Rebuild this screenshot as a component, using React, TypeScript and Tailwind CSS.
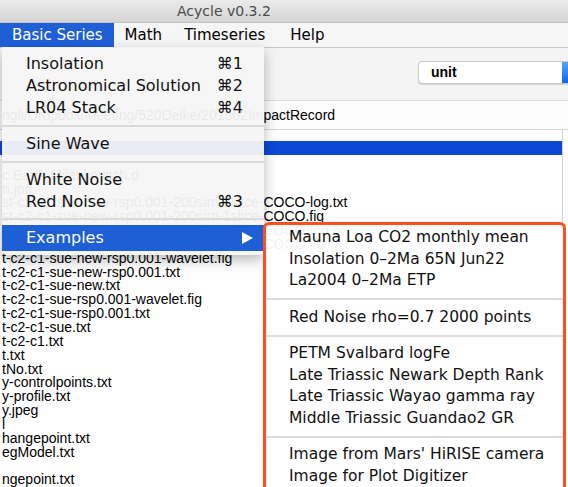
import React from 'react';

const files: string[] = [
  '',
  '',
  'c Earth Milankovitch.d',
  'n.jpg',
  'st-c2-c1-sue-new-rsp0.001-200sim-1slice-COCO-log.txt',
  'st-c2-c1-sue-new-rsp0.001-200sim-1slice-COCO.fig',
  'st-c2-c1-sue-new-rsp0.001-600sim-1slice-COCO-log.txt',
  'st-c2-c1-sue-new-rsp0.001-600sim-1slice-COCO.fig',
  't-c2-c1-sue-new-rsp0.001-wavelet.fig',
  't-c2-c1-sue-new-rsp0.001.txt',
  't-c2-c1-sue-new.txt',
  't-c2-c1-sue-rsp0.001-wavelet.fig',
  't-c2-c1-sue-rsp0.001.txt',
  't-c2-c1-sue.txt',
  't-c2-c1.txt',
  't.txt',
  'tNo.txt',
  'y-controlpoints.txt',
  'y-profile.txt',
  'y.jpeg',
  'l',
  'hangepoint.txt',
  'egModel.txt',
  '',
  'ngepoint.txt',
];

type Entry = { label: string; key?: string } | 'sep';

const basicSeries: Entry[] = [
  { label: 'Insolation', key: '⌘1' },
  { label: 'Astronomical Solution', key: '⌘2' },
  { label: 'LR04 Stack', key: '⌘4' },
  'sep',
  { label: 'Sine Wave' },
  'sep',
  { label: 'White Noise' },
  { label: 'Red Noise', key: '⌘3' },
];

const examples: Entry[] = [
  { label: 'Mauna Loa CO2 monthly mean' },
  { label: 'Insolation 0–2Ma 65N Jun22' },
  { label: 'La2004 0–2Ma ETP' },
  'sep',
  { label: 'Red Noise rho=0.7 2000 points' },
  'sep',
  { label: 'PETM Svalbard logFe' },
  { label: 'Late Triassic Newark Depth Rank' },
  { label: 'Late Triassic Wayao gamma ray' },
  { label: 'Middle Triassic Guandao2 GR' },
  'sep',
  { label: "Image from Mars' HiRISE camera" },
  { label: 'Image for Plot Digitizer' },
];

const menuFont = { fontFamily: '"DejaVu Sans", sans-serif' };

export default function App() {
  return (
    <div
      className="relative w-[568px] h-[487px] overflow-hidden bg-white text-black"
      style={{ fontFamily: '"Liberation Sans", Arial, sans-serif' }}
    >
      {/* title bar */}
      <div
        className="h-[23px] flex items-center pl-[177px] pt-[1px] border-b border-[#c4c4c4] bg-linear-to-b from-[#ebebeb] to-[#d5d5d5] text-[14px] text-[#4a4a4a]"
        style={menuFont}
      >
        Acycle v0.3.2
      </div>

      {/* menu bar */}
      <div className="h-[25px] flex items-stretch bg-[#f6f6f6] border-b border-[#c8c8c8] text-[15px]" style={menuFont}>
        <div className="flex items-center pl-[12px] pr-[11px] bg-[#1f5fd6] text-white">Basic Series</div>
        <div className="flex items-center px-[11px]">Math</div>
        <div className="flex items-center pl-[11px] pr-[13px]">Timeseries</div>
        <div className="flex items-center px-[12px]">Help</div>
      </div>

      {/* toolbar */}
      <div className="h-[53px] bg-[#f4f4f4] border-b border-[#dcdcdc] pl-[418px] pt-[13px] overflow-hidden">
        <div className="flex w-[170px] h-[23px] rounded-[4px] border border-[#c9c9c9] bg-white shadow-[0_1px_1px_rgba(0,0,0,0.12)] overflow-hidden">
          <div className="w-[143px] flex items-center pl-[12px] text-[14px] font-bold">unit</div>
          <div className="flex-1 bg-linear-to-b from-[#5aa0fb] to-[#0b62f2]" />
        </div>
      </div>

      {/* path */}
      <div className="h-[29px] flex items-center pl-[2px] border-b border-[#d8d8d8] bg-[#fcfcfc] text-[14px] whitespace-nowrap">
        ngli/Dropbox/Meeting/520Deike/201802ImpactRecord
      </div>

      {/* file list */}
      <div className="w-[563px] pt-[11px] border-r border-[#d0d0d0] text-[14px] leading-[13.85px]">
        {files.map((f, i) => (
          <div
            key={i}
            className={`h-[13.85px] pl-[2px] whitespace-nowrap ${i === 0 ? 'bg-[#0d47d6] text-white' : ''}`}
          >
            {f}
          </div>
        ))}
      </div>

      {/* Basic Series dropdown */}
      <div
        className="absolute left-[2px] top-[47px] w-[262px] pt-[6px] pb-[4px] bg-[#f6f6f6]/[0.95] rounded-b-[5px] shadow-[0_5px_14px_rgba(0,0,0,0.28)] text-[16px] text-[#111]"
        style={menuFont}
      >
        {basicSeries.map((e, i) =>
          e === 'sep' ? (
            <div key={i} className="h-[14px] flex items-center">
              <div className="h-[2px] w-full bg-[#dadada]" />
            </div>
          ) : (
            <div key={i} className="h-[22px] flex items-center justify-between pl-[24px] pr-[21px]">
              <span>{e.label}</span>
              {e.key && <span>{e.key}</span>}
            </div>
          )
        )}
        <div className="h-[12px] flex items-center">
          <div className="h-[2px] w-full bg-[#dadada]" />
        </div>
        <div className="h-[26px] flex items-center justify-between pl-[24px] pr-[11px] bg-[#1f5fd6] text-white">
          <span>Examples</span>
          <svg width="11" height="12" viewBox="0 0 11 12">
            <polygon points="0,0 11,6 0,12" fill="white" />
          </svg>
        </div>
      </div>

      {/* Examples submenu */}
      <div
        className="absolute left-[263px] top-[222px] w-[303px] h-[280px] pt-[2px] border-[3px] border-[#ff4f1f] rounded-[6px] bg-white/[0.95] text-[15.5px] text-[#111]"
        style={menuFont}
      >
        {examples.map((e, i) =>
          e === 'sep' ? (
            <div key={i} className="h-[15px] flex items-center">
              <div className="h-[2px] w-full bg-[#dedede]" />
            </div>
          ) : (
            <div key={i} className="h-[21.5px] flex items-center pl-[23px] whitespace-nowrap">
              {e.label}
            </div>
          )
        )}
      </div>
    </div>
  );
}
